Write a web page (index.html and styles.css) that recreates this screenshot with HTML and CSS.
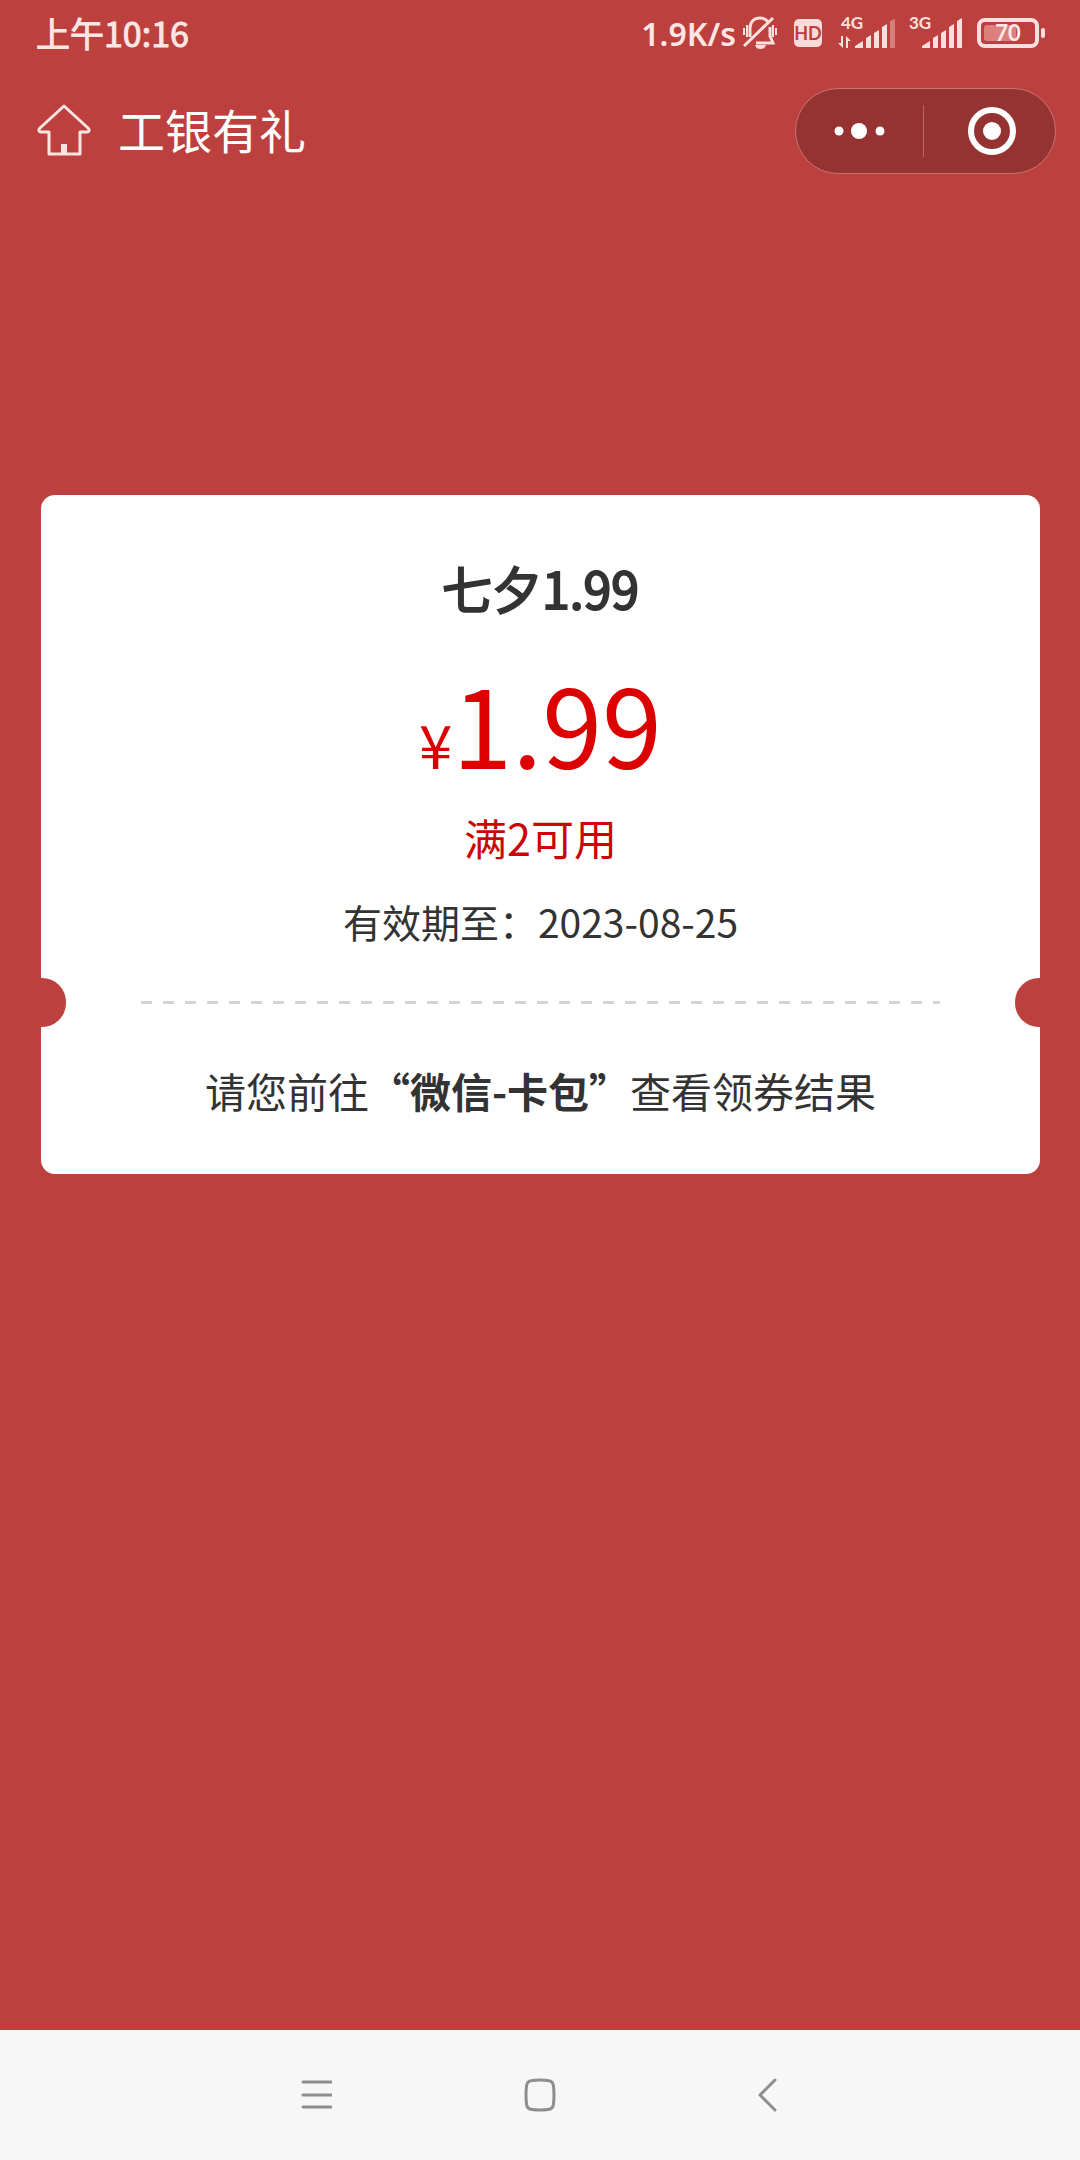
FILE: index.html
```
<!DOCTYPE html>
<html lang="zh-CN">
<head>
  <meta charset="UTF-8">
  <meta name="viewport" content="width=device-width, initial-scale=1.0">
  <title>工银有礼</title>
  <link rel="stylesheet" href="styles.css">
</head>
<body>
  <div class="status-bar">
    <span class="status-time">上午10:16</span>
    <div class="status-icons">
      <span class="status-speed">1.9K/s</span>
      <svg class="icon-mute" width="36" height="36" viewBox="0 0 36 36" fill="none" stroke="#fde0de" stroke-width="3">
        <path d="M8 22V13C8 7 12 3 18 3c4 0 6 1 8 4M28 12v9l3 7H14"/>
        <path d="M2 31L31 3" stroke-width="3"/>
        <path d="M2 13v7M5 10v12M34 13v7M31 10v12" stroke-width="2"/>
        <path d="M13 30h11c-1 3-3 4-5.500 4s-4.500-1-5.500-4z" fill="#fde0de" stroke="none"/>
      </svg>
      <svg class="icon-hd" width="28" height="28" viewBox="0 0 28 28">
        <rect width="28" height="28" rx="5" fill="#fbdad8"/>
        <text x="14" y="21" text-anchor="middle" font-size="18" fill="#bb403d">HD</text>
      </svg>
      <svg class="icon-signal" width="58" height="42" viewBox="0 -4 58 42" fill="#fde0de">
        <text x="3" y="13" font-size="17">4G</text>
        <path d="M3 20h2v12L0 27h3zM8 32V20l5 5h-3v7z"/>
        <path d="M17 32v-2l8-5v7zM28 32V22l5-3v13zM36 32V17l5-3v18zM44 32V11l5-3v24z"/>
        <path d="M52 32V5l5-2v29z" opacity=".4"/>
      </svg>
      <svg class="icon-signal" width="56" height="42" viewBox="0 -4 56 42" fill="#fde0de">
        <text x="1" y="13" font-size="17">3G</text>
        <path d="M14 32v-2l8-5v7zM25 32V22l5-3v13zM33 32V17l5-3v18zM41 32V11l5-3v24zM49 32V5l5-3v30z"/>
      </svg>
      <svg class="icon-battery" width="70" height="32" viewBox="0 0 70 32">
        <rect x="3" y="3" width="58" height="26" rx="6" fill="none" stroke="#fde0de" stroke-width="4"/>
        <rect x="8" y="8" width="32" height="16" rx="3" fill="#dc807c"/>
        <rect x="65" y="11" width="4" height="10" rx="2" fill="#fde0de"/>
        <text x="32" y="24" text-anchor="middle" font-size="22" fill="#ffe9e7">70</text>
      </svg>
    </div>
  </div>

  <header class="header">
    <a class="home" href="#" aria-label="首页">
      <svg width="54" height="54" viewBox="0 0 54 54" fill="none" stroke="#fde3e1" stroke-width="3" stroke-linejoin="round">
        <path d="M27 2L3 24c-2 2-1 4 1 4h8v22h31V28h7c2 0 3-2 1-4z"/>
        <path d="M27 40v10" stroke-width="6"/>
      </svg>
    </a>
    <h1>工银有礼</h1>
    <div class="capsule">
      <button aria-label="更多">
        <svg width="52" height="18" viewBox="0 0 52 18" fill="#fff">
          <circle cx="5" cy="9" r="4.500"/>
          <circle cx="25" cy="9" r="8"/>
          <circle cx="46" cy="9" r="4.500"/>
        </svg>
      </button>
      <span class="line"></span>
      <button aria-label="关闭">
        <svg width="48" height="48" viewBox="0 0 48 48">
          <circle cx="24" cy="24" r="21" fill="none" stroke="#fff" stroke-width="6"/>
          <circle cx="24" cy="24" r="9" fill="#fff"/>
        </svg>
      </button>
    </div>
  </header>

  <main class="content">
    <div class="card">
      <h2>七夕1.99</h2>
      <p class="price"><span class="yen">¥</span>1.99</p>
      <p class="rule">满2可用</p>
      <p class="date">有效期至：2023-08-25</p>
      <div class="divider"></div>
      <p class="tip">请您前往<b>“微信-卡包”</b>查看领券结果</p>
    </div>
  </main>

  <nav class="nav-bar">
    <button aria-label="最近任务">
      <svg width="34" height="34" viewBox="0 0 34 34" fill="none" stroke="#8e8e8e" stroke-width="3" stroke-linecap="round">
        <path d="M5 4h28M5 17h28M5 29h28"/>
      </svg>
    </button>
    <button aria-label="主屏幕">
      <svg width="34" height="34" viewBox="0 0 34 34" fill="none" stroke="#8e8e8e" stroke-width="3">
        <path d="M9 2.500Q17 1.500 25 2.500Q30 3 30.500 8Q31.500 17 30.500 26Q30 31 25 31.500Q17 32.500 9 31.500Q4 31 3.500 26Q2.500 17 3.500 8Q4 3 9 2.500z"/>
      </svg>
    </button>
    <button aria-label="返回">
      <svg width="34" height="34" viewBox="0 0 34 34" fill="none" stroke="#8e8e8e" stroke-width="3" stroke-linecap="round" stroke-linejoin="round">
        <path d="M27 2L12 17l15 15"/>
      </svg>
    </button>
  </nav>
</body>
</html>
```
FILE: styles.css
```
* {
  box-sizing: border-box;
}

body {
  display: flex;
  flex-direction: column;
  min-height: 100vh;
  margin: 0;
  background-color: #bc403d;
  color: #333;
  font-family: "Noto Sans CJK SC", sans-serif;
}

h1, h2, p {
  margin: 0;
}

button {
  display: flex;
  justify-content: center;
  align-items: center;
  padding: 0;
  border: none;
  background: none;
  cursor: pointer;
}

svg {
  display: block;
}

.status-bar {
  display: flex;
  justify-content: space-between;
  align-items: center;
  height: 66px;
  padding: 0 34px 0 36px;
  color: #ffe5e3;
}

.status-time {
  font-size: 34px;
  line-height: 66px;
  -webkit-text-stroke: 1px #ffe5e3;
}

.status-icons {
  display: flex;
  align-items: center;
}

.status-icons text {
  font-family: Lato, sans-serif;
  font-weight: bold;
}

.status-speed {
  margin-right: 6px;
  font-family: "Noto Sans", sans-serif;
  font-size: 32px;
  font-weight: 600;
}

.icon-mute,
.icon-hd {
  margin-right: 16px;
}

.icon-signal {
  margin-right: 12px;
}

.header {
  display: flex;
  align-items: center;
  height: 130px;
  padding: 0 24px 0 37px;
  color: #fff;
}

.header h1 {
  margin-left: 27px;
  padding-bottom: 6px;
  font-size: 47px;
  font-weight: normal;
}

.capsule {
  display: flex;
  align-items: center;
  width: 261px;
  height: 86px;
  margin-left: auto;
  border: 1px solid #c97471;
  border-radius: 43px;
  background-color: #943331;
}

.capsule button {
  flex: 1;
  height: 100%;
}

.capsule button:last-child {
  padding-left: 4px;
}

.capsule .line {
  width: 1px;
  height: 52px;
  background-color: #b56563;
}

.content {
  flex: 1;
  padding: 299px 40px 40px 41px;
}

.card {
  padding: 52px 0 54px;
  border-radius: 14px;
  background-color: #fff;
  text-align: center;
}

.card h2 {
  font-size: 50px;
  font-weight: normal;
  line-height: 80px;
  -webkit-text-stroke: 2px #333;
}

.price {
  margin-top: 14px;
  color: #d00;
  font-size: 108px;
  line-height: 162px;
}

.price .yen {
  font-size: 60px;
  line-height: 1;
}

.rule {
  margin-top: 2px;
  color: #cb0505;
  font-size: 43px;
  line-height: 64px;
}

.date {
  margin-top: 24px;
  font-size: 39px;
  line-height: 56px;
}

.divider {
  position: relative;
  height: 49px;
  margin-top: 29px;
  /* dashed line between the two notches */
  background: repeating-linear-gradient(to right, #d4d4d4 0, #d4d4d4 11px, transparent 11px, transparent 22px) center / 80% 3px no-repeat;
}

.divider::before,
.divider::after {
  content: "";
  position: absolute;
  top: 0;
  width: 25px;
  height: 49px;
  background-color: #bc403d;
}

.divider::before {
  left: 0;
  border-radius: 0 24px 24px 0;
}

.divider::after {
  right: 0;
  border-radius: 24px 0 0 24px;
}

.tip {
  margin-top: 33px;
  font-size: 41px;
  line-height: 60px;
}

.tip b {
  font-weight: bold;
}

.nav-bar {
  display: flex;
  justify-content: center;
  align-items: center;
  height: 130px;
  background-color: #f7f7f7;
}

.nav-bar button {
  width: 225px;
  height: 100%;
}
```
